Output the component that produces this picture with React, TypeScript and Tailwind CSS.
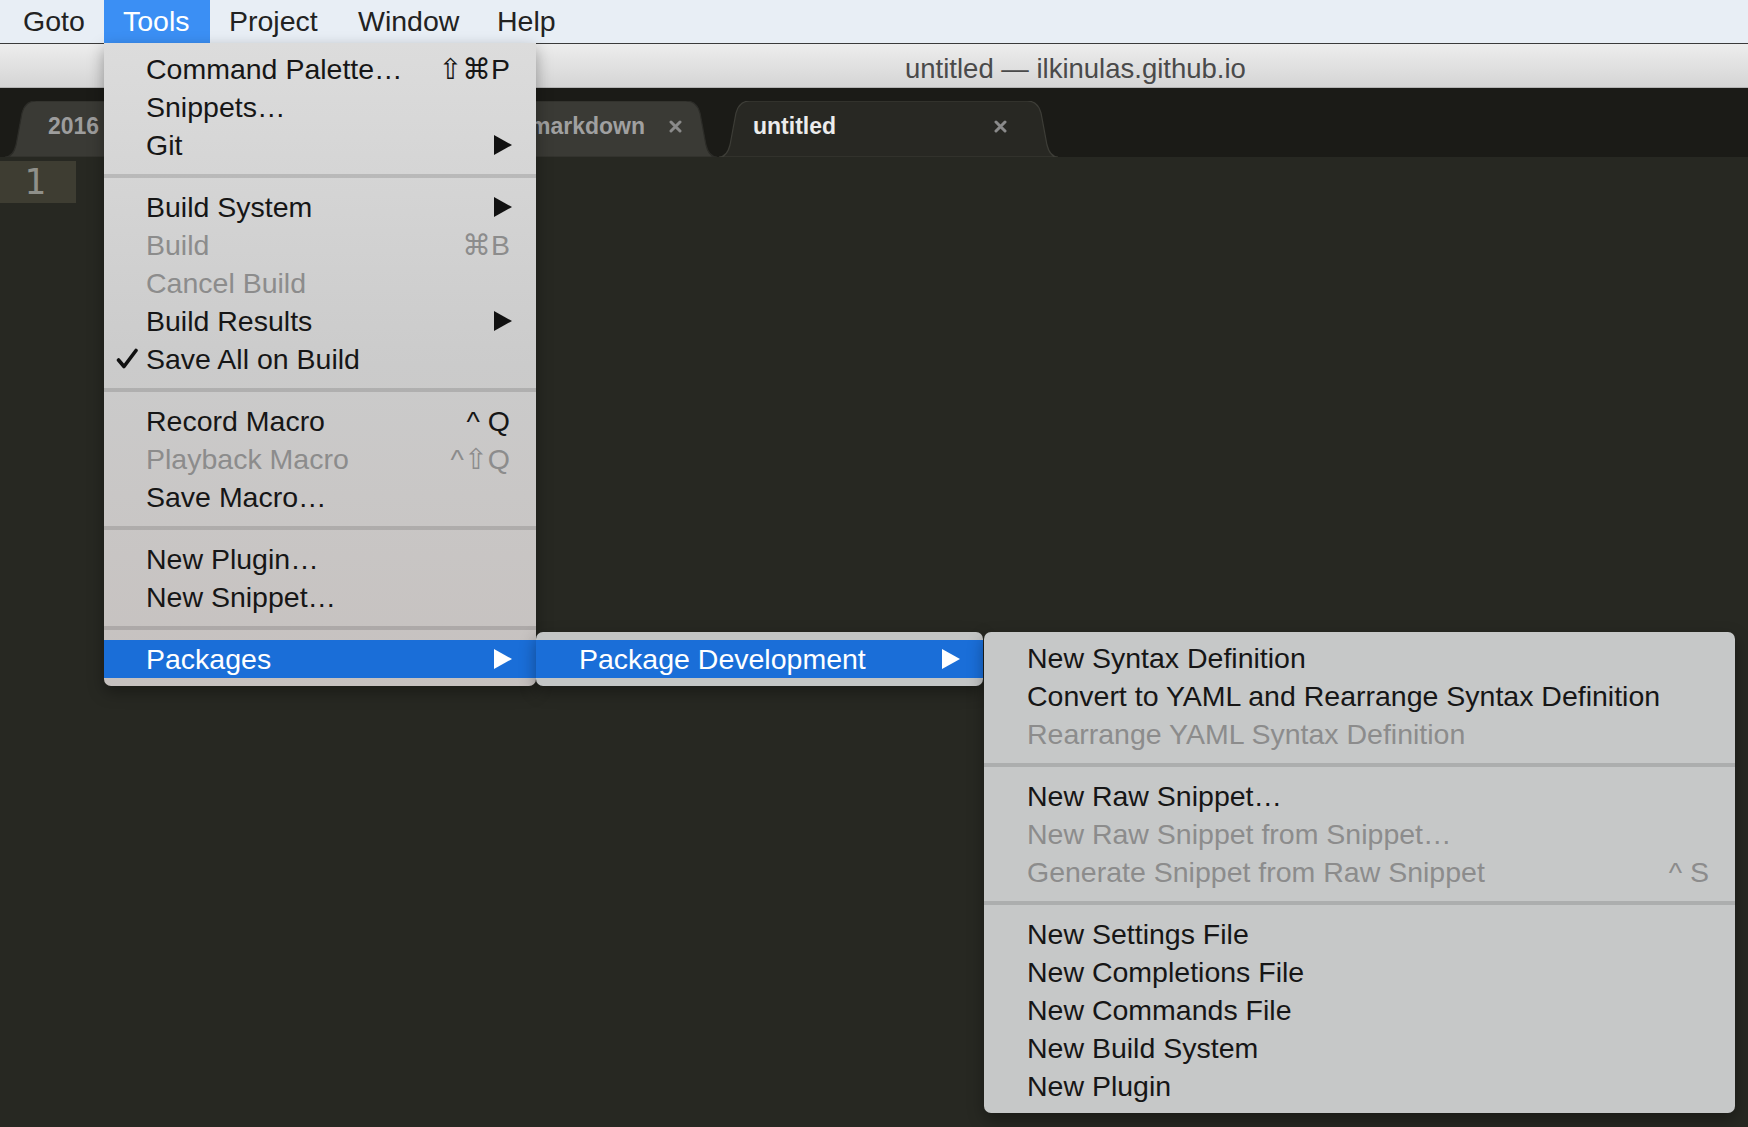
import React from "react";

// menu item shape
type Item = {
  label: string;
  shortcut?: string;
  sub?: boolean;
  disabled?: boolean;
  checked?: boolean;
};

const toolsGroups: Item[][] = [
  [
    { label: "Command Palette…", shortcut: "⇧⌘P" },
    { label: "Snippets…" },
    { label: "Git", sub: true },
  ],
  [
    { label: "Build System", sub: true },
    { label: "Build", shortcut: "⌘B", disabled: true },
    { label: "Cancel Build", disabled: true },
    { label: "Build Results", sub: true },
    { label: "Save All on Build", checked: true },
  ],
  [
    { label: "Record Macro", shortcut: "^ Q" },
    { label: "Playback Macro", shortcut: "^⇧Q", disabled: true },
    { label: "Save Macro…" },
  ],
  [{ label: "New Plugin…" }, { label: "New Snippet…" }],
];

const devGroups: Item[][] = [
  [
    { label: "New Syntax Definition" },
    { label: "Convert to YAML and Rearrange Syntax Definition" },
    { label: "Rearrange YAML Syntax Definition", disabled: true },
  ],
  [
    { label: "New Raw Snippet…" },
    { label: "New Raw Snippet from Snippet…", disabled: true },
    { label: "Generate Snippet from Raw Snippet", shortcut: "^ S", disabled: true },
  ],
  [
    { label: "New Settings File" },
    { label: "New Completions File" },
    { label: "New Commands File" },
    { label: "New Build System" },
    { label: "New Plugin" },
  ],
];

const Arrow = ({ white }: { white?: boolean }) => (
  <svg width="18" height="20" viewBox="0 0 18 20" className="shrink-0">
    <polygon points="0,0 18,10 0,20" fill={white ? "#ffffff" : "#111111"} />
  </svg>
);

const Check = () => (
  <svg width="22" height="21" viewBox="0 0 22 21" className="absolute left-[12px] top-[8px]">
    <path d="M2.5 12 L8 18.5 L20 2.5" stroke="#111" strokeWidth="3.6" fill="none" strokeLinecap="round" strokeLinejoin="round" />
  </svg>
);

const Close = ({ color }: { color: string }) => (
  <svg width="13" height="13" viewBox="0 0 13 13" className="shrink-0">
    <path d="M2 2 L11 11 M11 2 L2 11" stroke={color} strokeWidth="3" strokeLinecap="round" />
  </svg>
);

const Separator = () => (
  <div className="h-[24px] flex items-center">
    <div className="h-[4px] w-full bg-black/[0.13]" />
  </div>
);

function Row({ item, pl }: { item: Item; pl: string }) {
  return (
    <div className={`relative h-[38px] flex items-center pr-[24px] ${pl} ${item.disabled ? "text-[#8c8c8c]" : "text-[#161616]"}`}>
      {item.checked && <Check />}
      <span className="flex-1 whitespace-nowrap">{item.label}</span>
      {item.shortcut && <span className="mr-[2px] whitespace-nowrap">{item.shortcut}</span>}
      {item.sub && <Arrow />}
    </div>
  );
}

function Tab({
  w,
  active,
  className,
  children,
}: {
  w: number;
  active?: boolean;
  className: string;
  children: React.ReactNode;
}) {
  const h = 56;
  const d = `M0 ${h} C6 ${h} 9 ${h - 4} 11 ${h - 12} L17 12 C19 4 23 0 31 0 L${w - 31} 0 C${w - 23} 0 ${w - 19} 4 ${w - 17} 12 L${w - 11} ${h - 12} C${w - 9} ${h - 4} ${w - 6} ${h} ${w} ${h} Z`;
  return (
    <div className={`relative h-[56px] shrink-0 ${className}`}>
      <svg width={w} height={h} viewBox={`0 0 ${w} ${h}`} className="absolute inset-0">
        <path d={d} fill={active ? "#282823" : "#3a3a35"} stroke={active ? "#3d3d37" : "#2c2c28"} strokeWidth="1.2" />
      </svg>
      <div className="relative h-full flex items-center pb-[6px]">{children}</div>
    </div>
  );
}

export default function App() {
  return (
    <div className="relative w-full h-[1127px] overflow-hidden flex flex-col bg-[#272822] font-['Liberation_Sans','DejaVu_Sans',sans-serif]">
      {/* menu bar */}
      <div className="relative z-20 h-[44px] shrink-0 flex items-stretch pl-[4px] bg-[#e8eef5] border-b border-[#3a3a3a] text-[28.5px] text-[#222]">
        <div className="w-[100px] pl-[19px] flex items-center">Goto</div>
        <div className="relative w-[106px] pl-[19px] flex items-center bg-[#3b8ff4] text-white">
          Tools
          {/* Tools dropdown */}
          <div className="absolute left-0 top-[43px] w-[432px] pt-[7px] pb-[8px] rounded-b-[7px] bg-linear-to-b from-[#dcdcdc] via-[#cbcbcb] to-[#c6c1bf] shadow-[0_6px_16px_rgba(0,0,0,0.35)] text-[28.5px] leading-none">
            {toolsGroups.map((group, gi) => (
              <div key={gi}>
                {group.map((item) => (
                  <Row key={item.label} item={item} pl="pl-[42px]" />
                ))}
                <Separator />
              </div>
            ))}
            <div className="relative h-[38px] flex items-center pl-[42px] pr-[24px] bg-[#1a6ed8] text-white">
              <span className="flex-1">Packages</span>
              <Arrow white />
              {/* Package Development submenu */}
              <div className="absolute left-full top-[-8px] w-[447px] py-[8px] rounded-[7px] bg-[#c3c5c5] shadow-[0_6px_16px_rgba(0,0,0,0.35)]">
                <div className="h-[38px] flex items-center pl-[43px] pr-[23px] bg-[#1a6ed8] text-white">
                  <span className="flex-1 whitespace-nowrap">Package Development</span>
                  <Arrow white />
                </div>
                {/* third level */}
                <div className="absolute left-[448px] top-0 w-[751px] pt-[7px] pb-[8px] rounded-[7px] bg-[#c6c8c8] shadow-[0_6px_16px_rgba(0,0,0,0.35)]">
                  {devGroups.map((group, gi) => (
                    <div key={gi}>
                      {group.map((item) => (
                        <Row key={item.label} item={item} pl="pl-[43px]" />
                      ))}
                      {gi < devGroups.length - 1 && <Separator />}
                    </div>
                  ))}
                </div>
              </div>
            </div>
          </div>
        </div>
        <div className="w-[129px] pl-[19px] flex items-center">Project</div>
        <div className="w-[139px] pl-[19px] flex items-center">Window</div>
        <div className="pl-[19px] flex items-center">Help</div>
      </div>

      {/* title bar */}
      <div className="h-[44px] shrink-0 flex items-center pt-[6px] pl-[905px] bg-linear-to-b from-[#ededed] to-[#d5d5d5] border-b border-[#b4b4b4] text-[27.5px] text-[#4a4a4a] whitespace-nowrap">
        untitled — ilkinulas.github.io
      </div>

      {/* tab bar */}
      <div className="h-[69px] shrink-0 flex items-end pl-[5px] bg-[#1b1b17] text-[23px] font-bold">
        <Tab w={375} className="w-[375px]">
          <span className="pl-[43px] text-[#9d9d9d] whitespace-nowrap overflow-hidden">2016 06 12 sublime text.markdown</span>
        </Tab>
        <Tab w={355} className="w-[355px] ml-[-18px]">
          <div className="flex-1 flex justify-end overflow-hidden ml-[20px]">
            <span className="text-[#a0a0a0] whitespace-nowrap">2016-06-14-sublime-package-development.markdown</span>
          </div>
          <span className="ml-[24px] mr-[35px]">
            <Close color="#8a8a8a" />
          </span>
        </Tab>
        <Tab w={339} active className="w-[339px] ml-[2px]">
          <span className="flex-1 pl-[34px] text-[#ececec]">untitled</span>
          <span className="mr-[51px]">
            <Close color="#8a8a8a" />
          </span>
        </Tab>
      </div>

      {/* editor */}
      <div className="flex-1 bg-[#272822] pt-[4px]">
        <div className="w-[76px] h-[42px] bg-[#3e3d32] flex items-center pl-[24px] text-[36px] leading-none text-[#8f908a] font-['DejaVu_Sans_Mono',monospace]">
          1
        </div>
      </div>
    </div>
  );
}
